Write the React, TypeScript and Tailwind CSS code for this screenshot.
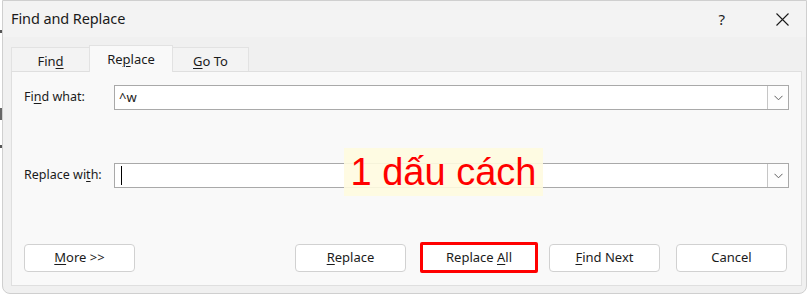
import React from 'react';

const ui = { fontFamily: '"Noto Sans", "Open Sans", sans-serif' };

function U({ children }: { children: React.ReactNode }) {
  return <span className="underline underline-offset-[2px] decoration-[1px]">{children}</span>;
}

function Combo({ caret }: { caret?: boolean }) {
  return (
    <div className="flex-1 h-[25px] bg-white border border-[#a9a9a9] flex items-stretch">
      <div className="flex-1 flex items-center pl-[4px]">
        {caret && <div className="w-px h-[19px] bg-black ml-[2px]" />}
      </div>
      <div className="w-[21px] border-l border-[#c6c6c6] bg-[#fdfdfd] flex items-center justify-center">
        <svg width="9" height="6" viewBox="0 0 9 6" fill="none">
          <path d="M0.5 0.8 L4.5 4.8 L8.5 0.8" stroke="#5f5f5f" strokeWidth="1" />
        </svg>
      </div>
    </div>
  );
}

function Btn({ children, className = '' }: { children: React.ReactNode; className?: string }) {
  return (
    <div
      className={`w-[111px] h-[28px] bg-white rounded-[4px] border border-[#d1d1d1] flex items-center justify-center text-[13px] text-[#1b1b1b] ${className}`}
    >
      <span>{children}</span>
    </div>
  );
}

export default function App() {
  return (
    <div className="w-[811px] h-[298px] bg-white overflow-hidden relative" style={ui}>
      <div className="absolute left-0 top-[30px] w-[2px] h-[3px] bg-[#555]" />
      <div className="absolute left-0 top-[108px] w-[2px] h-[12px] bg-[#666]" />
      <div className="absolute left-0 top-[145px] w-[2px] h-[3px] bg-[#555]" />

      <div className="ml-[2px] w-[805px] h-[294px] border border-[#cfcfcf] rounded-b-[8px] overflow-hidden flex flex-col bg-[#f0f0f0]">
        {/* Title bar */}
        <div className="h-[36px] bg-[#f3f3f3] flex items-center pl-[8px] shrink-0">
          <span className="text-[14.5px] text-[#1a1a1a] tracking-[-0.1px]">Find and Replace</span>
          <span className="ml-auto mr-[51px] text-[15px] text-[#222]">?</span>
          <svg className="mr-[17px]" width="13" height="13" viewBox="0 0 13 13">
            <path d="M0.5 0.5 L12.5 12.5 M12.5 0.5 L0.5 12.5" stroke="#1a1a1a" strokeWidth="1.1" />
          </svg>
        </div>

        {/* Tabs */}
        <div className="flex-1 flex flex-col pl-[8px] pr-[4px] pb-[7px]">
          <div className="flex items-end h-[35px] shrink-0">
            <div className="w-[79px] h-[25px] pt-[3px] bg-[#f3f3f3] border border-b-0 border-[#e2e2e2] flex items-center justify-center text-[13px] text-[#1b1b1b]">
              <span>
                Fin<U>d</U>
              </span>
            </div>
            <div className="w-[84px] h-[27px] pt-[2px] bg-[#f9f9f9] border border-b-0 border-[#e2e2e2] flex items-center justify-center text-[13px] text-[#1b1b1b] -mx-px relative z-10">
              <span>
                Re<U>p</U>lace
              </span>
            </div>
            <div className="w-[77px] h-[25px] pt-[3px] bg-[#f3f3f3] border border-b-0 border-[#e2e2e2] flex items-center justify-center text-[13px] text-[#1b1b1b]">
              <span>
                <U>G</U>o To
              </span>
            </div>
          </div>

          <div className="flex-1 bg-[#f9f9f9] border border-[#dfdfdf] -mt-px flex flex-col px-[12px] pt-[13px] pb-[12px] relative">
            <div className="flex items-center">
              <span className="w-[90px] text-[12.5px] text-[#1b1b1b]">
                Fi<U>n</U>d what:
              </span>
              <div className="flex-1 relative">
                <Combo />
                <span className="absolute left-[5px] top-[3px] text-[13px] text-[#1b1b1b]">^w</span>
              </div>
            </div>

            <div className="flex items-center mt-[53px]">
              <span className="w-[90px] text-[12.5px] text-[#1b1b1b]">
                Replace wi<U>t</U>h:
              </span>
              <Combo caret />
            </div>

            <div className="mt-auto flex items-center">
              <Btn>
                <U>M</U>ore &gt;&gt;
              </Btn>
              <Btn className="ml-[160px]">
                <U>R</U>eplace
              </Btn>
              <div className="ml-[14px] w-[118px] h-[31px] border-[3px] border-[#ff0000] rounded-[2px] bg-white flex items-center justify-center text-[13px] text-[#1b1b1b]">
                <span>
                  Replace <U>A</U>ll
                </span>
              </div>
              <Btn className="ml-[11px] border-[#0067c0]">
                <U>F</U>ind Next
              </Btn>
              <Btn className="ml-[16px]">Cancel</Btn>
            </div>

            {/* Annotation overlay */}
            <div
              className="absolute left-[332px] top-[76px] w-[199px] h-[48px] bg-[#fffbe0]/90 flex items-center justify-center text-[38px] leading-none text-[#ff0000]"
              style={{ fontFamily: '"Liberation Sans", Arial, sans-serif' }}
            >
              1 dấu cách
            </div>
          </div>
        </div>
      </div>
    </div>
  );
}
